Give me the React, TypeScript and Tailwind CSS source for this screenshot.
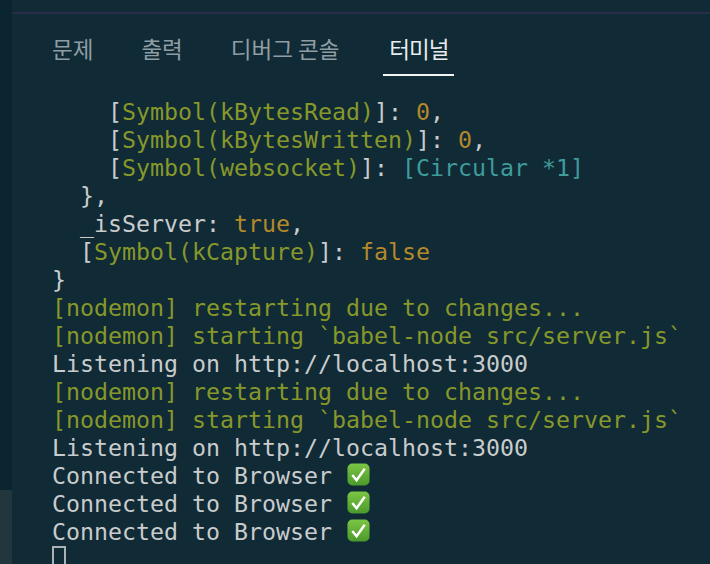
import React from 'react';

const OL = 'text-[#87982a]';
const OR = 'text-[#b3892a]';

const CheckEmoji = () => (
  <svg width="23" height="23" viewBox="0 0 24 24" className="absolute left-[1px] top-[1px]">
    <defs>
      <linearGradient id="chk" x1="0" y1="0" x2="0" y2="1">
        <stop offset="0" stopColor="#7cc644" />
        <stop offset="1" stopColor="#4a9a2c" />
      </linearGradient>
    </defs>
    <rect x="0.5" y="0.5" width="23" height="23" rx="5" fill="url(#chk)" />
    <path d="M5.5 12.5 L10 18 L18.5 6" fill="none" stroke="#ffffff" strokeWidth="2.6" />
  </svg>
);

const Sym = ({ name }: { name: string }) => (
  <>
    [<span className={OL}>Symbol({name})</span>]:
  </>
);

const Connected = () => (
  <div>
    Connected to Browser{' '}
    <span className="relative inline-block w-[28px] h-[28px] align-top">
      <CheckEmoji />
    </span>
  </div>
);

export default function App() {
  const tabs = ['문제', '출력', '디버그 콘솔', '터미널'];

  return (
    <div className="w-[710px] h-[564px] overflow-hidden flex bg-[#102a36]">
      <div className="w-[12px] flex flex-col shrink-0">
        <div className="h-[490px] bg-[#0b2530]" />
        <div className="flex-1 bg-[#22363d]" />
      </div>

      <div className="flex-1 min-w-0 flex flex-col">
        <div className="h-[12px] shrink-0" />
        <div className="h-[2px] shrink-0 bg-[#2b2b4a]" />

        <div className="flex pl-[34px] gap-[36px] pt-[19px] shrink-0 font-['Noto_Sans_CJK_KR',sans-serif] text-[22.5px] leading-[30px] text-[#8f9ea3]">
          {tabs.map((t, i) => (
            <div
              key={t}
              className={
                i === 3
                  ? 'h-[43px] px-[6px] text-[#e8eced] border-b-2 border-[#f2f4f4] ml-[2px] tracking-[-1px]'
                  : 'h-[43px] px-[6px]'
              }
            >
              {t}
            </div>
          ))}
        </div>

        <div className="pl-[40px] pt-[22px] font-['DejaVu_Sans_Mono',monospace] text-[23.25px] leading-[28px] whitespace-pre text-[#c9cccc]">
          <div>
            {'    '}
            <Sym name="kBytesRead" /> <span className={OR}>0</span>,
          </div>
          <div>
            {'    '}
            <Sym name="kBytesWritten" /> <span className={OR}>0</span>,
          </div>
          <div>
            {'    '}
            <Sym name="websocket" /> <span className="text-[#3f9c9b]">[Circular *1]</span>
          </div>
          <div>{'  },'}</div>
          <div>
            {'  _isServer: '}
            <span className={OR}>true</span>,
          </div>
          <div>
            {'  '}
            <Sym name="kCapture" /> <span className={OR}>false</span>
          </div>
          <div>{'}'}</div>
          <div className={OL}>[nodemon] restarting due to changes...</div>
          <div className={OL}>[nodemon] starting `babel-node src/server.js`</div>
          <div>Listening on http://localhost:3000</div>
          <div className={OL}>[nodemon] restarting due to changes...</div>
          <div className={OL}>[nodemon] starting `babel-node src/server.js`</div>
          <div>Listening on http://localhost:3000</div>
          <Connected />
          <Connected />
          <Connected />
          <div className="w-[14px] h-[28px] border-2 border-[#a9b2b4]" />
        </div>
      </div>
    </div>
  );
}
